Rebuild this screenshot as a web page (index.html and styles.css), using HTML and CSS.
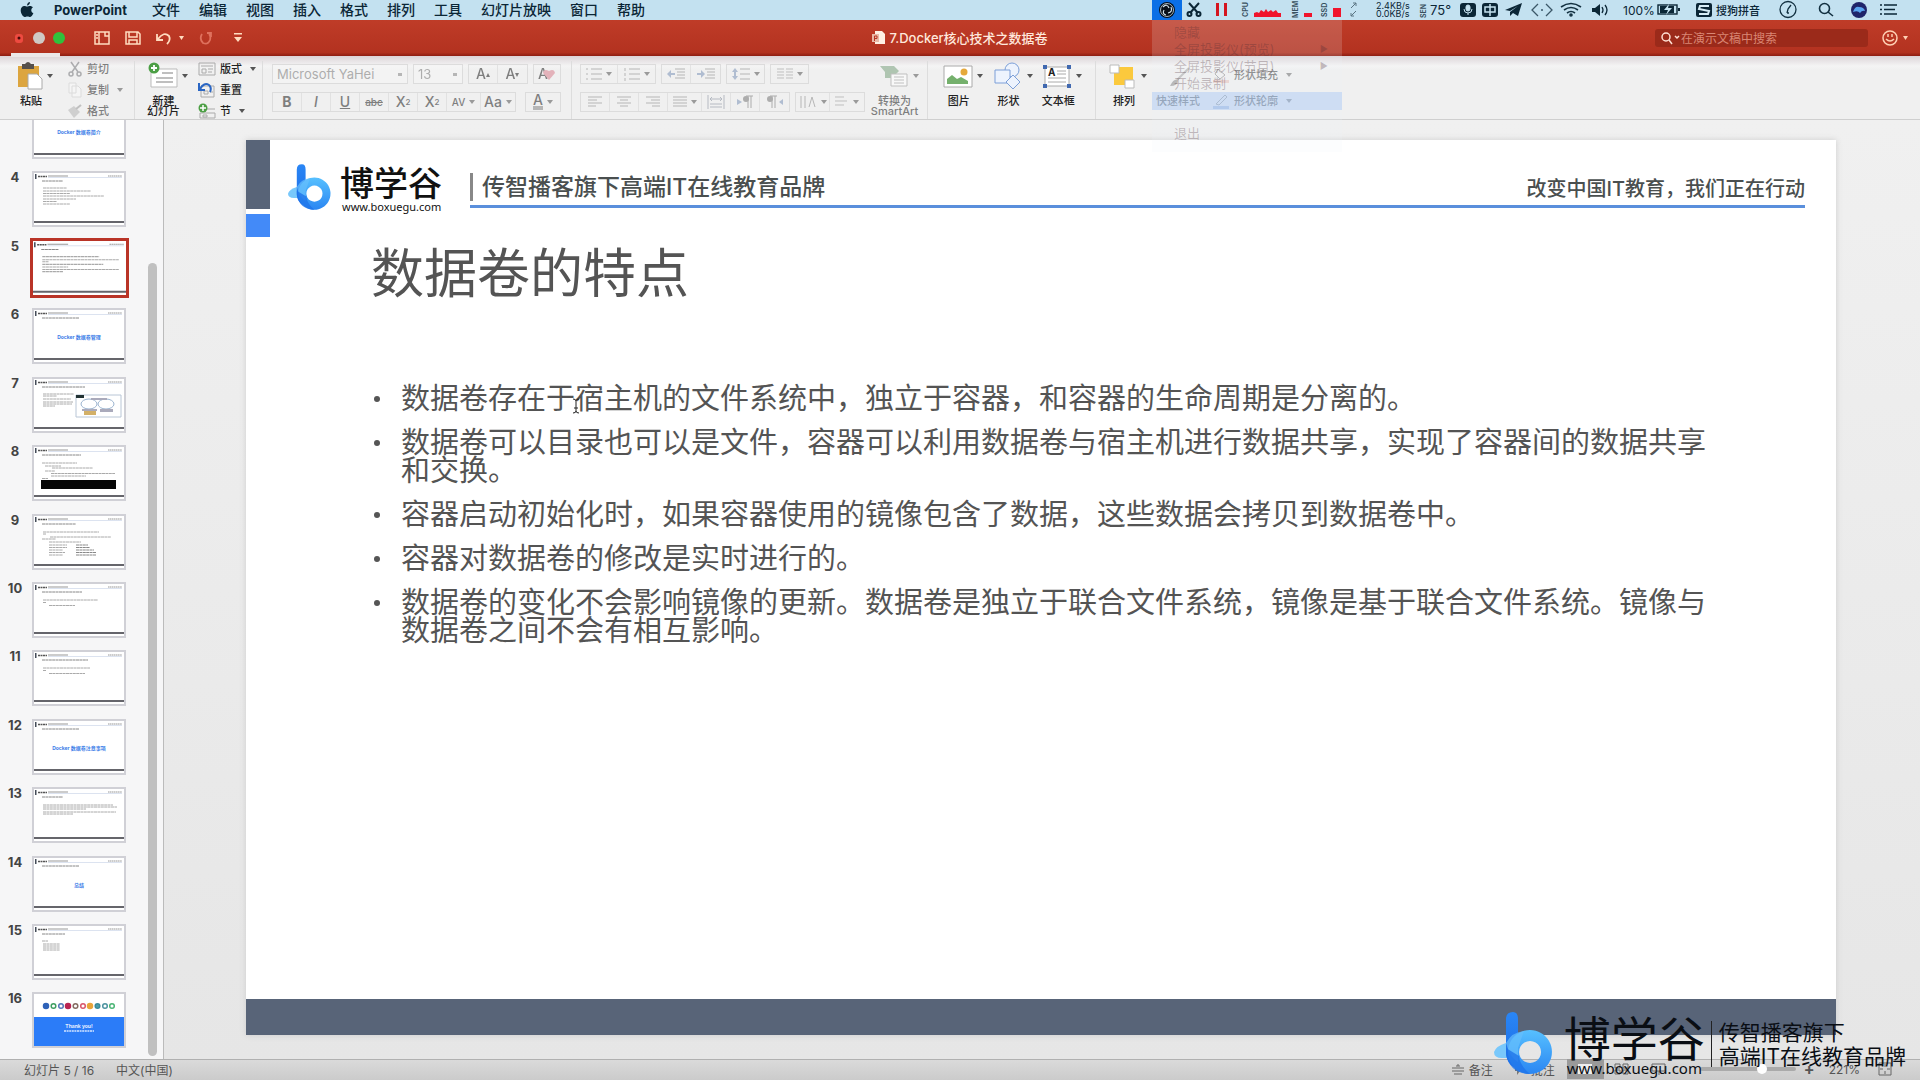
FILE: index.html
```html
<!DOCTYPE html>
<html lang="zh-CN">
<head>
<meta charset="utf-8">
<title>7.Docker核心技术之数据卷</title>
<link rel="stylesheet" href="styles.css">
</head>
<body>
<svg class="defs" aria-hidden="true">
  <defs>
    <linearGradient id="stem" x1="0" y1="0" x2="0" y2="1"><stop offset="0" stop-color="#2a86f5"/><stop offset="1" stop-color="#1b6be6"/></linearGradient>
    <linearGradient id="ring" x1="0" y1="0" x2="0" y2="1"><stop offset="0" stop-color="#57c0ff"/><stop offset="1" stop-color="#2a86f2"/></linearGradient>
    <symbol id="logo" viewBox="0 0 60 62">
      <path d="M0 40 Q2 34 12 31 L20 46 L8 46 Q0 46 0 40Z" fill="#79c8fb"/>
      <path d="M12 7 Q12 0 19 0 Q24 0 24 7 V40 L30 58 Q12 56 12 40Z" fill="url(#stem)"/>
      <path fill-rule="evenodd" d="M36 18 A22 22 0 1 1 35.900 18Z M36 29 A11 11 0 1 0 36.100 29Z" fill="url(#ring)"/>
      <path d="M12 31 Q18 20 30 19 L24 36 L24 50 Q16 46 12 31Z" fill="#66bffc" opacity=".7"/>
      <path d="M12 36 L25 44 Q26 54 36 62 Q16 62 12 42Z" fill="#1f74ea" opacity=".8"/>
    </symbol>
    <symbol id="head" viewBox="0 0 90 52">
      <path d="M1 1h1.500v5h-1.500z" fill="#444c58"/><path d="M4 3.500h9" stroke="#555" stroke-width="1.500" stroke-dasharray="2 .5"/><path d="M14 3h20" stroke="#999"/><path d="M74 3h14" stroke="#999" stroke-dasharray="1.500 .4"/><path d="M14 4.500h74" stroke="#b9c6e0" stroke-width=".5"/>
      <path d="M0 48h90v2h-90z" fill="#65656b"/>
    </symbol>
  </defs>
</svg>

<nav class="menubar">
  <svg class="apple" width="14" height="16" viewBox="0 0 14 16"><path d="M10 0c0 2-1.500 3.500-3 3.500 0-2 1.500-3.300 3-3.500zM7 4.600c1 0 1.800-.7 3.200-.7 1 0 2 .5 2.700 1.500-2.400 1.400-2 4.800.5 5.700-.8 2.200-2 3.900-3.200 3.900-1 0-1.400-.6-2.700-.6s-1.800.6-2.800.6C3 15 .7 11.500.7 8.300.7 5.500 2.400 3.900 4.200 3.900c1.200 0 2 .7 2.800.7z" fill="#0b2636"/></svg>
  <strong>PowerPoint</strong>
  <div class="menus"><span>文件</span><span>编辑</span><span>视图</span><span>插入</span><span>格式</span><span>排列</span><span>工具</span><span>幻灯片放映</span><span>窗口</span><span>帮助</span></div>
  <div class="tray">
    <svg width="30" height="20"><path d="M0 0h30v20h-30z" fill="#0a6fe6"/><circle cx="15" cy="10" r="8" fill="#081018"/><g fill="none" stroke="#cfe0ea"><circle cx="15" cy="10" r="6.500" stroke-width=".8"/><path d="M11 7q4-4 6 1M19 7q2 5-3 6M14 15q-4-1-2-5" stroke-width="1.200"/></g></svg>
    <svg width="24" height="20" fill="none" stroke="#0b2636" stroke-width="2"><path d="M7 3l9 10M17 3l-9 10"/><circle cx="7.500" cy="14" r="2"/><circle cx="16.500" cy="14" r="2"/></svg>
    <svg width="30" height="20"><path d="M10 3h3v13h-3zM18 3h3v13h-3z" fill="#d4141f"/></svg>
    <svg width="50" height="20"><text class="vlabel" transform="translate(12 17) rotate(-90)">CPU</text><path d="M18 17v-4l3-1 2 1 2-3 3 2 2-3 2 3 3-2 2 2 3-2 2 3 3 0v4z" fill="#f0142c"/></svg>
    <svg width="29" height="20"><text class="vlabel" transform="translate(12 18) rotate(-90)">MEM</text><path d="M18 13h8v4h-8z" fill="#f0142c"/></svg>
    <svg width="29" height="20"><text class="vlabel" transform="translate(12 17) rotate(-90)">SSD</text><path d="M18 8h8v9h-8z" fill="#f0142c"/></svg>
    <svg width="26" height="20" fill="none" stroke="#5a7482"><path d="M7 8l5-5M9 3h3v3M12 11l-5 5M7 13v3h3"/></svg>
    <span class="net">2.4KB/s<br>0.0KB/s</span>
    <svg width="16" height="20"><text class="vlabel" transform="translate(12 18) rotate(-90)">SEN</text></svg>
    <span class="temp">75°</span>
    <svg width="24" height="20"><rect x="4" y="3" width="16" height="14" rx="3" fill="#0b2636"/><g fill="none" stroke="#c5e2f0"><rect x="10" y="5" width="4" height="6" rx="2" fill="#c5e2f0"/><path d="M8 9q0 4 4 4t4-4M12 13v2"/></g></svg>
    <svg width="24" height="20"><rect x="2" y="3" width="16" height="14" rx="3" fill="#0b2636"/><path d="M5 7h10v5h-10zM10 4v12" fill="none" stroke="#c5e2f0" stroke-width="1.500"/></svg>
    <svg width="24" height="20"><path d="M1 10L18 3l-4 13-5-3-3 3v-4l8-6-8 5z" fill="#0b2636"/></svg>
    <svg width="28" height="20" fill="none" stroke="#3b5768" stroke-width="1.300"><path d="M10 4l-6 6 6 6M18 4l6 6-6 6M13 10h2"/></svg>
    <svg width="30" height="20" fill="none" stroke="#123040" stroke-width="1.600"><path d="M5 7q10-7 20 0M8 10q7-5 14 0M11 13q4-3 8 0"/><circle cx="15" cy="15" r="1"/></svg>
    <svg width="30" height="20"><path d="M6 8h3l5-4v12l-5-4h-3z" fill="#0b2636"/><path d="M16 7q2 3 0 6M19 5q4 5 0 10" fill="none" stroke="#0b2636" stroke-width="1.300"/></svg>
    <span class="pct">100%</span>
    <svg width="32" height="20"><rect x="2" y="5" width="19" height="9" fill="none" stroke="#0b2636" stroke-width="1.400"/><path d="M4 6h14v7h-14z" fill="#0b2636"/><path d="M13 4l-5 6h4l-2 5 6-7h-4z" fill="#c5e2f0"/><path d="M22 8h2v3h-2z" fill="#0b2636"/></svg>
    <svg width="28" height="20"><rect x="8" y="3" width="16" height="14" rx="2" fill="#0b2636"/><path d="M21 6h-9l-1 3 10 2-1 3h-9" fill="none" stroke="#d7edf6" stroke-width="2"/></svg>
    <span class="ime">搜狗拼音</span>
    <svg width="44" height="20" fill="none" stroke="#123040" stroke-width="1.300"><circle cx="20" cy="9.500" r="8"/><path d="M19 13l1-4 3-4M19 13h2"/></svg>
    <svg width="32" height="20" fill="none" stroke="#123040" stroke-width="1.600"><circle cx="12.500" cy="8.500" r="5"/><path d="M16 12l5 4"/></svg>
    <svg width="30" height="20"><circle cx="15" cy="10" r="8" fill="#20246a"/><path d="M9 12q2-6 6-5 5 0 6 4-3-1-5 2-2-3-7-1z" fill="#5aa4f0"/></svg>
    <svg width="46" height="20" stroke="#0b2636" stroke-width="1.700"><path d="M10 5h13M10 9.500h11M10 14h13M6 5h2M6 9.500h2M6 14h2"/></svg>
  </div>
</nav>

<header class="titlebar">
  <div class="quick">
    <svg width="70" height="20"><rect x="15" y="6" width="8" height="9" rx="3" fill="#ee4a40"/><circle cx="19" cy="10" r="1.500" fill="#4a0a08"/><circle cx="39" cy="10" r="6" fill="#cfc9c5"/><circle cx="59" cy="10" r="6" fill="#2fc13c"/></svg>
    <button aria-label="边栏"><svg width="16" height="14" fill="none" stroke="#ffdcc0" stroke-width="1.500"><path d="M1 1h14v12h-14zM5 1v12M11 1v4h4M2 4h2M2 7h2"/></svg></button>
    <button aria-label="保存"><svg width="16" height="14" fill="none" stroke="#ffdcc0" stroke-width="1.500"><path d="M1 1h12l2 2v10h-14zM4 1v5h8v-5M4 13v-4h8v4"/></svg></button>
    <button aria-label="撤销"><svg width="28" height="14" fill="none" stroke="#ffdcc0" stroke-width="1.800"><path d="M1 3v6h6M2 8q6-8 11-3 2 4-2 8"/><path d="M23 5h5l-2.500 4z" fill="#ffdcc0" stroke="none"/></svg></button>
    <button class="dim" aria-label="重做"><svg width="14" height="14" fill="none" stroke="#f08a76" stroke-width="1.800"><path d="M8 2h4v4M3 3q-3 5 1 9 5 2 7-3 1-4-1-6"/></svg></button>
    <button aria-label="自定义"><svg width="10" height="14"><path d="M1 2h8v1.500h-8zM1 6h8l-4 5z" fill="#ffdcc0"/></svg></button>
  </div>
  <h1><svg width="13" height="14"><path d="M3 0h7l3 3v10h-10z" fill="#fff0e4"/><path d="M0 3h7v8h-7z" fill="#e9b9a8"/><path d="M2.500 10v-5h2.500v2.500h-2" fill="none" stroke="#b73523"/></svg>7.Docker核心技术之数据卷</h1>
  <div class="find">
    <label class="search"><svg width="22" height="14" fill="none" stroke="#ffe0d4" stroke-width="1.500"><circle cx="7" cy="6" r="4"/><path d="M10 9l3 4M16 5l2 2 2-2"/></svg><input type="text" placeholder="在演示文稿中搜索" aria-label="搜索"></label>
    <svg width="26" height="18" fill="none" stroke="#ffd0b4" stroke-width="1.500"><circle cx="8" cy="9" r="7"/><path d="M4 10q4 4 8 0M6 5v3M10 5v3"/><path d="M21 7h5l-2.500 4z" fill="#ffd0b4" stroke="none"/></svg>
  </div>
</header>

<section class="ribbon">
  <div class="group paste">
    <button class="big"><span class="ico"><svg width="26" height="28"><path d="M1 4h21v21h-21z" fill="#dca53f"/><path d="M5 2h3q3-4 6 0h3v5h-12z" fill="#55504c"/><path d="M11 12h9l5 5v10h-14z" fill="#fff" stroke="#aaa"/></svg><i class="caret"></i></span>粘贴</button>
  </div>
  <div class="group stack clip faded">
    <button><svg width="16" height="16" fill="none" stroke="#76777b" stroke-width="1.500"><path d="M4 1l7 10M12 1l-7 10"/><circle cx="4" cy="13" r="2"/><circle cx="12" cy="13" r="2"/></svg>剪切</button>
    <button><svg width="16" height="16" fill="#fafafa" stroke="#ccc"><path d="M2 1h7v10h-7zM5 4h6l3 3v8h-9z"/></svg>复制<i class="caret"></i></button>
    <button><svg width="16" height="16"><path d="M1 7l6-4 6 6-6 6z" fill="#b5b5b5"/><path d="M9 6l5-4" stroke="#999" stroke-width="2"/></svg>格式</button>
  </div>
  <div class="group newslide">
    <button class="big"><span class="ico"><svg width="30" height="28"><path d="M3 7h26v18h-26z" fill="#fff" stroke="#bbb"/><path d="M14 11h11M8 16h17M8 20h17" stroke="#aaa" stroke-width="1.500"/><circle cx="6" cy="6" r="5.500" fill="#4c9f45"/><path d="M6 3v6M3 6h6" stroke="#fff" stroke-width="1.800"/></svg><i class="caret"></i></span>新建<br>幻灯片</button>
  </div>
  <div class="group stack layout">
    <button><svg width="18" height="16" fill="none" stroke="#aaa"><path d="M1 2h16v12h-16zM3 5h12M4 8h4v4h-4zM10 8h5M10 11h4"/></svg>版式<i class="caret"></i></button>
    <button><svg width="18" height="16" fill="none" stroke="#aaa"><path d="M3 4h13v11h-13zM6 9h4v3h-4zM12 10h3"/><path d="M1 1v7h6M2 7q4-7 9-4 3 3 1 7" stroke="#2a66c4" stroke-width="2"/></svg>重置</button>
    <button><svg width="18" height="16" fill="none" stroke="#aaa"><path d="M7 6h10M2 10h15v5h-15zM5 12h4v2h-4z"/><circle cx="5" cy="5" r="4.500" fill="#4c9f45" stroke="none"/><path d="M5 2v6M2 5h6" stroke="#fff" stroke-width="1.500"/></svg>节<i class="caret"></i></button>
  </div>
  <div class="group tools font faded">
    <div class="row">
      <select class="fontname" aria-label="字体"><option>Microsoft YaHei</option></select>
      <select class="fontsize" aria-label="字号"><option>13</option></select>
      <span class="set"><button class="t29">A<small>▴</small></button><button class="t29">A<small>▾</small></button></span>
      <span class="set"><button class="t27" aria-label="清除格式">A<svg width="14" height="14"><path d="M7 13l-6-7q1-5 6-2 5-3 6 2z" fill="#d9808f"/></svg></button></span>
    </div>
    <div class="row">
      <span class="set"><button class="t29"><b>B</b></button><button class="t29"><em>I</em></button><button class="t29"><u>U</u></button><button class="t29 sm"><s>abc</s></button><button class="t29">X<sup>2</sup></button><button class="t29">X<sub>2</sub></button><button class="t34 sm">AV<i class="caret"></i></button><button class="t34">Aa<i class="caret"></i></button></span>
      <span class="set last"><button class="t34"><span class="ink">A</span><i class="caret"></i></button></span>
    </div>
  </div>
  <div class="group tools para faded">
    <div class="row">
      <span class="set"><button class="t38"><svg width="16" height="14"><path d="M5 2h11M5 7h11M5 12h11M0 2h2M0 7h2M0 12h2" stroke="#888"/></svg><i class="caret"></i></button><button class="t38"><svg width="16" height="14"><path d="M5 2h11M5 7h11M5 12h11M1 1v3M1 6v3M1 11v3" stroke="#888"/></svg><i class="caret"></i></button></span>
      <span class="set"><button class="t29"><svg width="18" height="14"><path d="M8 2h10M10 5h8M10 8h8M8 11h10" stroke="#888"/><path d="M0 7l4-4v3h4v2h-4v3z" fill="#7d94b8"/></svg></button><button class="t29"><svg width="18" height="14"><path d="M8 2h10M10 5h8M10 8h8M8 11h10" stroke="#888"/><path d="M8 7l-4-4v3h-4v2h4v3z" fill="#7d94b8"/></svg></button></span>
      <span class="set"><button class="t38"><svg width="18" height="14"><path d="M8 2h10M8 7h10M8 12h10" stroke="#888"/><path d="M0 5l3-4 3 4zM0 9l3 4 3-4zM2 5h2v4h-2z" fill="#7d94b8"/></svg><i class="caret"></i></button></span>
      <span class="set"><button class="t38"><svg width="16" height="14"><path d="M0 2h7M0 5h7M0 8h7M0 11h7M9 2h7M9 5h7M9 8h7M9 11h7" stroke="#999"/></svg><i class="caret"></i></button></span>
    </div>
    <div class="row">
      <span class="set"><button class="t29"><svg width="14" height="14"><path d="M0 2h14M0 5h9M0 8h14M0 11h8" stroke="#888"/></svg></button><button class="t29"><svg width="14" height="14"><path d="M0 2h14M3 5h8M0 8h14M3 11h8" stroke="#888"/></svg></button><button class="t29"><svg width="14" height="14"><path d="M0 2h14M5 5h9M0 8h14M6 11h8" stroke="#888"/></svg></button><button class="t34"><svg width="14" height="14"><path d="M0 2h14M0 5h14M0 8h14M0 11h14" stroke="#888"/></svg><i class="caret"></i></button><button class="t29"><svg width="18" height="14" fill="none" stroke="#8890a0"><path d="M1 0v14M17 0v14M3 4h12M5 2l-2 2 2 2M13 2l2 2-2 2M3 9h12M3 12h12"/></svg></button><button class="t29"><svg width="18" height="14"><path d="M1 4l5 3-5 3z" fill="#7d94b8"/><path d="M12 1v12M15 1v12M10 1h7" stroke="#777"/><circle cx="10" cy="4" r="3" fill="#777"/></svg></button><button class="t29"><svg width="18" height="14"><path d="M17 4l-4 3 4 3z" fill="#7d94b8"/><path d="M6 1v12M9 1v12M4 1h7" stroke="#777"/><circle cx="4" cy="4" r="3" fill="#777"/></svg></button></span>
      <span class="set"><button class="t34"><svg width="18" height="14"><path d="M2 1v12M6 1v12M10 12l3-10 3 10" fill="none" stroke="#888"/></svg><i class="caret"></i></button><button class="t34"><svg width="14" height="14"><path d="M0 2h9M0 6h12M0 10h9" stroke="#999"/></svg><i class="caret"></i></button></span>
    </div>
  </div>
  <div class="group smart faded">
    <button class="big"><span class="ico"><svg width="30" height="28"><path d="M1 4h14l5 5-3 3h-3v4h-8v-6z" fill="#7ba27f"/><path d="M12 12h16v12h-16z" fill="#fff" stroke="#999"/><path d="M15 15h10M15 18h10M15 21h10" stroke="#999"/></svg><i class="caret"></i></span>转换为<br>SmartArt</button>
  </div>
  <div class="group insert">
    <button class="big"><span class="ico"><svg width="30" height="28"><path d="M1 4h28v21h-28z" fill="#fff" stroke="#aaa"/><path d="M4 22v-5l5-4 5 4 4-2 7 4v3z" fill="#74b06c"/><circle cx="21" cy="10" r="3.500" fill="#e5a93b"/></svg><i class="caret"></i></span>图片</button>
    <button class="big"><span class="ico"><svg width="30" height="28" fill="#edf3fd" stroke="#7c9fd8"><circle cx="19" cy="8" r="7"/><path d="M2 8h15v13h-15z"/><path d="M20 13l7 7-7 7-7-7z"/></svg><i class="caret"></i></span>形状</button>
    <button class="big"><span class="ico"><svg width="30" height="28"><path d="M3 5h24v19h-24z" fill="#fff" stroke="#aaa"/><path d="M15 9h9M15 12h9M6 16h18M6 20h18" stroke="#aaa"/><path d="M1 3h4v4h-4zM25 3h4v4h-4zM1 22h4v4h-4zM25 22h4v4h-4z" fill="#4169b0"/><text x="6" y="14" class="boxa">A</text></svg><i class="caret"></i></span>文本框</button>
  </div>
  <div class="group arrange">
    <button class="big"><span class="ico"><svg width="28" height="28"><path d="M5 5h19v18h-19z" fill="#fbc93d"/><path d="M1 3h9v8h-9zM16 18h9v8h-9z" fill="#fff" stroke="#bbb"/></svg><i class="caret"></i></span>排列</button>
  </div>
  <div class="group styles faded">
    <button class="big"><span class="ico"><svg width="36" height="28"><path d="M6 24q4-8 8-6 0 6-8 6z" fill="#777"/><path d="M13 18l12-12" stroke="#999" stroke-width="2"/></svg></span>快速样式</button>
  </div>
  <div class="group stack shapefmt faded">
    <button><svg width="18" height="16"><path d="M6 2l7 6-5 4-5-5z" fill="none" stroke="#777"/><path d="M1 13h16v3h-16z" fill="#e6b8b0"/></svg>形状填充<i class="caret"></i></button>
    <button><svg width="18" height="16"><path d="M4 11l9-9 2 2-8 8z" fill="none" stroke="#777"/><path d="M1 13h16v3h-16z" fill="#8ba8d8"/></svg>形状轮廓<i class="caret"></i></button>
  </div>
</section>

<div class="ghost" aria-hidden="true">
  <span>隐藏</span><span>全屏投影仪(预览)<i>▶</i></span><span>全屏投影仪(节目)<i>▶</i></span><span>开始录制</span><span class="on"></span><span class="quit">退出</span>
</div>

<div class="work">
  <aside>
    <ol>
      <li><b></b><svg viewBox="0 0 90 52"><use href="#head"/><text x="45" y="29" class="tt">Docker 数据卷简介</text></svg></li>
      <li><b>4</b><svg viewBox="0 0 90 52"><use href="#head"/><g class="ln"><path class="dk" d="M8 8h21"/><path d="M9 15h24M9 18h48M9 20.500h27M9 23h61M9 26h33M9 28.500h14M9 31h27"/></g></svg></li>
      <li class="sel"><b>5</b><svg viewBox="0 0 90 52"><use href="#head"/><g class="ln"><path class="dk" d="M8 8h17"/><path d="M9 15h55M9 18h74M9 20h6M9 22.500h59M9 25h25M9 27.500h74M9 29.500h20"/></g></svg></li>
      <li><b>6</b><svg viewBox="0 0 90 52"><use href="#head"/><path class="ln dk" d="M8 8h37"/><text x="45" y="29" class="tt">Docker 数据卷管理</text></svg></li>
      <li><b>7</b><svg viewBox="0 0 90 52"><use href="#head"/><g class="ln"><path class="dk" d="M8 8h43"/><path d="M9 15h31M9 17h14M9 20h28M9 23h30M9 25h29M9 27h12"/></g><path d="M42 16h45v22h-45z" fill="#fff" stroke="#b9c6d6"/><path d="M42 16h8v3h-8z" fill="#233"/><ellipse cx="55" cy="25" rx="8" ry="5" fill="none" stroke="#9bb4d0"/><ellipse cx="72" cy="25" rx="8" ry="5" fill="none" stroke="#9bb4d0"/><path d="M48 30h15v2h-15zM66 30h13v3h-13zM57 19h16v2h-16z" fill="#aab"/><path d="M50 32h12v4h-12z" fill="#d3b067"/></svg></li>
      <li><b>8</b><svg viewBox="0 0 90 52"><use href="#head"/><g class="ln"><path class="dk" d="M8 8h39"/><path d="M8 16h35M11 19h16M18 21h41M11 24h10M17 26.500h64M17 29h35M8 31.500h6"/></g><path d="M7 33h75v9h-75z" fill="#050505"/></svg></li>
      <li><b>9</b><svg viewBox="0 0 90 52"><use href="#head"/><g class="ln"><path class="dk" d="M8 8h34"/><path d="M9 16h56M9 18h3M16 21h61M8 23h14M15 26h32M15 29h18M15 31.500h18M15 34h14M15 36.500h16M15 39h14"/><path class="dk" d="M42 29h12M42 31.500h14M42 34h18M42 36.500h20M42 39h20"/></g></svg></li>
      <li><b>10</b><svg viewBox="0 0 90 52"><use href="#head"/><g class="ln"><path class="dk" d="M8 8h40"/><path d="M9 16h55M9 18.500h3M15 21.500h26"/></g></svg></li>
      <li><b>11</b><svg viewBox="0 0 90 52"><use href="#head"/><g class="ln"><path class="dk" d="M8 8h46"/><path d="M9 16h47M9 18.500h3M15 21.500h36"/></g></svg></li>
      <li><b>12</b><svg viewBox="0 0 90 52"><use href="#head"/><path class="ln dk" d="M8 8h37"/><text x="45" y="29" class="tt">Docker 数据卷注意事项</text></svg></li>
      <li><b>13</b><svg viewBox="0 0 90 52"><use href="#head"/><g class="ln"><path class="dk" d="M8 8h21"/><path d="M9 16h70M9 18h74M9 20h43M9 23h73M9 25h30"/></g></svg></li>
      <li><b>14</b><svg viewBox="0 0 90 52"><use href="#head"/><path class="ln dk" d="M8 8h37"/><text x="45" y="29" class="tt">总结</text></svg></li>
      <li><b>15</b><svg viewBox="0 0 90 52"><use href="#head"/><g class="ln"><path class="dk" d="M8 8h23"/><path d="M8 15h6M9 18h17M9 20h17M9 22h17M9 24h17"/></g></svg></li>
      <li><b>16</b><svg viewBox="0 0 90 52"><path d="M0 23h90v29h-90z" fill="#2b7cf8"/><g fill="#fff" stroke-width="1.500"><circle cx="12" cy="12" r="2.500" fill="#2e62b8" stroke="#2e62b8"/><circle cx="19.500" cy="12" r="2.300" stroke="#3f9f61"/><circle cx="27" cy="12" r="2.300" stroke="#5577b8"/><circle cx="34" cy="12" r="2.500" fill="#b92452" stroke="#b92452"/><circle cx="41.500" cy="12" r="2.300" stroke="#846a60"/><circle cx="49" cy="12" r="2.300" stroke="#d9556b"/><circle cx="56" cy="12" r="2.500" fill="#e8a43a" stroke="#e8a43a"/><circle cx="63.500" cy="12" r="2.300" fill="#4c9ca8" stroke="#388a9a"/><circle cx="71" cy="12" r="2.300" stroke="#4d93a0"/><circle cx="78" cy="12" r="2.300" stroke="#4cb576"/></g><text x="45" y="34" class="ty">Thank you!</text><path d="M30 37h30" stroke="#a9cbff" stroke-width="2" stroke-dasharray="2 .6"/></svg></li>
    </ol>
    <div class="scroll"></div>
  </aside>
  <main>
    <article class="slide">
      <div class="mark"><i></i><i></i></div>
      <div class="brand">
        <svg width="44" height="46"><use href="#logo"/></svg>
        <div class="name"><strong>博学谷</strong><span>www.boxuegu.com</span></div>
        <div class="line"><p class="slogan">传智播客旗下高端IT在线教育品牌</p><p class="motto">改变中国IT教育，我们正在行动</p></div>
      </div>
      <div class="content">
        <h2>数据卷的特点</h2>
        <ul>
          <li>数据卷存在于宿主机的文件系统中，独立于容器，和容器的生命周期是分离的。</li>
          <li>数据卷可以目录也可以是文件，容器可以利用数据卷与宿主机进行数据共享，实现了容器间的数据共享<br>和交换。</li>
          <li>容器启动初始化时，如果容器使用的镜像包含了数据，这些数据会拷贝到数据卷中。</li>
          <li>容器对数据卷的修改是实时进行的。</li>
          <li>数据卷的变化不会影响镜像的更新。数据卷是独立于联合文件系统，镜像是基于联合文件系统。镜像与<br>数据卷之间不会有相互影响。</li>
        </ul>
      </div>
      <div class="base"></div>
      <svg class="ibeam" width="8" height="16"><path d="M1 1q3 0 3 2v10q0 2-3 2M7 1q-3 0-3 2M7 15q-3 0-3-2M2 10h4" fill="none" stroke="#222"/></svg>
    </article>
  </main>
</div>

<footer class="status">
  <span class="pos">幻灯片 5 / 16</span><span>中文(中国)</span>
  <div class="right">
    <button><svg width="14" height="14" stroke="#666"><path d="M1 6h12M1 9h12M3 12h8M5 4h4M7 2v2"/></svg>备注</button>
    <button class="cm"><svg width="14" height="14"><path d="M2 2h10v7h-5l-3 4v-4h-2z" fill="#777"/></svg>批注</button>
    <span class="views"><button class="on" aria-label="普通视图"><svg width="16" height="12"><path d="M1 1h14v10h-14z" fill="#eee"/></svg></button><button aria-label="幻灯片浏览"><svg width="16" height="12"><path d="M1 1h5v4h-5zM9 1h5v4h-5zM1 7h5v4h-5zM9 7h5v4h-5z" fill="none" stroke="#666"/></svg></button><button aria-label="放映"><svg width="16" height="12"><path d="M1 1h13v7h-13zM8 8v4" fill="none" stroke="#666"/></svg></button></span>
    <span class="zoom"><input type="range" min="0" max="100" value="67" aria-label="缩放"><b>+</b></span>
    <span class="lvl">221%</span>
    <svg width="14" height="14" fill="none" stroke="#666"><path d="M1 1h12v12h-12zM7 2v3M7 9v3M2 7h3M9 7h3"/></svg>
  </div>
</footer>

<div class="watermark">
  <svg width="60" height="62"><use href="#logo"/></svg>
  <div class="wname"><strong>博学谷</strong><span>www.boxuegu.com</span></div>
  <p>传智播客旗下<br>高端IT在线教育品牌</p>
</div>
</body>
</html>
```
FILE: styles.css
```css
* { box-sizing: border-box; margin: 0; padding: 0; }
body {
  height: 100vh; display: flex; flex-direction: column; overflow: hidden; position: relative;
  font-family: "Inter", "Noto Sans CJK SC", sans-serif; font-size: 11px; color: #222; background: #ececec;
}
svg { flex: none; display: block; }
.defs { position: absolute; width: 0; height: 0; }
button { border: 0; background: none; font: inherit; color: inherit; display: flex; align-items: center; }
i { font-style: normal; }

.menubar { height: 20px; flex: none; background: #c3e1f0; display: flex; align-items: center; padding-left: 20px; color: #0b2636; white-space: nowrap; }
.menubar strong { width: 98px; padding-left: 20px; box-sizing: content-box; font-size: 13px; line-height: 20px; }
.menus { display: flex; gap: 19px; font-size: 14px; font-weight: 500; line-height: 20px; }
.tray { margin-left: auto; display: flex; align-items: center; height: 20px; }
.vlabel { font: 700 7px "Inter", sans-serif; fill: #38505e; }
.net { width: 44px; padding-left: 6px; font-size: 9px; line-height: 8px; }
.temp { width: 26px; font-size: 13px; }
.pct { width: 40px; padding-left: 7px; font-size: 12px; }
.ime { width: 52px; font-size: 11px; font-weight: 500; }

.titlebar { height: 36px; flex: none; display: grid; grid-template-columns: 1fr auto 1fr; align-items: center; background: linear-gradient(#bf3c28, #b33220 90%, #8e1d12); }
.quick { display: flex; align-items: center; }
.quick button { margin-left: 15px; }
.quick svg + button { margin-left: 24px; }
.quick .dim { opacity: .7; }
.quick .dim + button { margin-left: 20px; }
.titlebar h1 { display: flex; align-items: center; gap: 4px; color: #ffe8dc; font-size: 13px; font-weight: 500; line-height: 20px; }
.find { display: flex; justify-content: flex-end; align-items: center; gap: 14px; padding-right: 12px; }
.search { width: 213px; height: 18px; padding-left: 4px; border-radius: 3px; background: #9b2a1a; display: flex; align-items: center; }
.search input { flex: 1; min-width: 0; border: 0; outline: 0; background: none; font: 12px "Inter", "Noto Sans CJK SC", sans-serif; color: #fff; }
.search input::placeholder { color: #d98674; }

.ribbon { position: relative; height: 64px; flex: none; display: flex; background: linear-gradient(#dcd4d8, #f4f4f4 10px, #f0f0f0 14px); border-bottom: 1px solid #cfcfcf; padding-top: 5px; white-space: nowrap; }
.ribbon::before { content: ""; position: absolute; left: 11px; top: -3px; width: 49px; height: 4px; background: #ece8ea; }
.group { display: flex; flex: none; line-height: 10px; font-weight: 500; }
.group.faded > * { opacity: .55; }
.caret { width: 0; height: 0; border: 3px solid transparent; border-top: 4px solid #555; border-bottom: 0; margin-left: 4px; flex: none; }
.big { flex: 1; flex-direction: column; text-align: center; padding-top: 1px; }
.ico { display: flex; align-items: center; height: 28px; margin-bottom: 6px; padding-left: 8px; }
.paste { width: 62px; }
.clip { width: 72px; padding-left: 5px; }
.newslide { width: 64px; padding-right: 6px; border-left: 1px solid #ddd; }
.layout { width: 64px; }
.font { width: 309px; border-left: 1px solid #ddd; padding-left: 9px; }
.para { width: 295px; border-left: 1px solid #ddd; padding-left: 8px; }
.smart { width: 61px; padding-right: 4px; }
.insert { width: 168px; padding-right: 12px; border-left: 1px solid #ddd; }
.insert .big:first-child { padding-left: 6px; }
.arrange { width: 57px; border-left: 1px solid #ddd; }
.styles { width: 52px; }
.stack { flex-direction: column; gap: 5px; padding-top: 0; }
.stack button { height: 16px; gap: 4px; }
.shapefmt { padding: 6px 0 0 8px; gap: 10px; }
.tools { flex-direction: column; gap: 8px; padding-top: 3px; font-size: 14px; }
.row { display: flex; gap: 5px; height: 20px; }
.set { display: flex; border: 1px solid #ccc; }
.set.last { margin-left: auto; margin-right: 10px; }
.set button { justify-content: center; border-right: 1px solid #d6d6d6; line-height: 14px; }
.set button:last-child { border-right: 0; }
.t27 { width: 26px; }
.t29 { width: 29px; }
.t34 { width: 34px; }
.t38 { width: 37px; }
.t27 svg { margin-left: -6px; }
.sm { font-size: 10px; }
.tools small, .tools sup, .tools sub { font-size: 8px; }
.ink { border-bottom: 4px solid #888; line-height: 12px; }
.row select { appearance: none; border: 1px solid #ccc; background: #f6f6f6 linear-gradient(#888, #888) right 5px center / 4px 3px no-repeat; font: 13px "Inter", sans-serif; color: #777; padding-left: 4px; }
.fontname { width: 136px; }
.fontsize { width: 50px; }
.boxa { font: 700 10px "Inter", sans-serif; fill: #222; }

.ghost { position: absolute; left: 60%; top: 20px; width: 190px; height: 132px; padding-top: 3px; background: rgba(240, 242, 247, .17); font-size: 13px; color: rgba(70, 40, 50, .28); z-index: 3; }
.ghost span { display: flex; height: 17px; align-items: center; padding: 0 14px 0 22px; }
.ghost i { margin-left: auto; font-size: 9px; }
.ghost .on { height: 18px; margin-top: 1px; background: rgba(160, 195, 245, .42); }
.ghost .quit { margin-top: 14px; }

.work { flex: 1; min-height: 0; display: flex; }
aside { width: 164px; flex: none; display: flex; justify-content: space-between; background: #f6f6f7; border-right: 1px solid #bbb; overflow: hidden; }
aside ol { list-style: none; width: 130px; height: calc(100% + 19px); margin-top: -17px; display: flex; flex-direction: column; }
aside li { flex: 1; min-height: 0; display: flex; align-items: flex-start; }
aside li b { width: 30px; font-size: 13px; line-height: 13px; text-align: center; color: #444; }
aside li svg { width: 94px; height: 56px; margin-left: 2px; border: 2px solid #d0d0d6; background: #fff; }
aside .sel svg { width: 99px; height: 60px; margin: -2px 0 0; border: 3px solid #b93427; }
.ln, .ln path { stroke: #aaa; stroke-width: 1; stroke-dasharray: 3 .4; fill: none; }
.dk, .ln .dk { stroke: #888; stroke-width: 1; }
.tt { font: 700 5px "Inter", "Noto Sans CJK SC", sans-serif; fill: #3b7de8; text-anchor: middle; }
.ty { font: 700 5px "Inter", sans-serif; fill: #e2eeff; text-anchor: middle; }
.scroll { width: 9px; margin: 143px 6px 3px 0; border-radius: 5px; background: #c0c0c0; }

main { flex: 1; padding: 20px 84px 0 82px; background: linear-gradient(#f0f0f0, #e6e6e6); }
.slide { position: relative; aspect-ratio: 1590 / 895; background: #fff; display: flex; flex-direction: column; box-shadow: 0 0 6px #ccc; }
.mark { position: absolute; left: 0; top: 0; }
.mark i { display: block; width: 24px; height: 69px; background: #586478; }
.mark i + i { height: 23px; margin-top: 5px; background: #438af8; }
.brand { display: flex; align-items: flex-start; padding: 24px 31px 0 42px; height: 68px; }
.name { width: 130px; flex: none; margin-left: 8px; display: flex; flex-direction: column; color: #111; }
.name strong { font-size: 34px; line-height: 36px; font-weight: 500; padding-top: 2px; }
.name span { font: 11px/10px "Noto Sans", sans-serif; margin-left: 2px; }
.line { flex: 1; height: 44px; border-bottom: 3px solid #5a8fdc; display: flex; justify-content: space-between; align-items: center; color: #4a4f4f; font-weight: 500; padding-top: 4px; }
.slogan { font-size: 23px; line-height: 28px; border-left: 3px solid #888; padding-left: 9px; }
.motto { font-size: 20px; line-height: 28px; padding-top: 4px; }
.content { flex: 1; padding: 38px 60px 0 125px; color: #545454; }
.content h2 { font-size: 53px; line-height: 56px; font-weight: 400; }
.content ul { list-style: none; margin-top: 83px; display: flex; flex-direction: column; gap: 16px; }
.content li { font-size: 29px; line-height: 28px; white-space: nowrap; padding-left: 30px; position: relative; }
.content li::before { content: ""; position: absolute; left: 3px; top: 11px; width: 6px; height: 6px; border-radius: 50%; background: #555; }
.base { height: 36px; background: #586478; }
.ibeam { position: absolute; left: 326px; top: 258px; }

.status { height: 21px; flex: none; display: flex; align-items: center; gap: 22px; padding: 0 28px 2px 24px; border-top: 1px solid #b0b0b0; background: linear-gradient(#dadada, #cbcbcb); font-size: 12px; color: #555; white-space: nowrap; }
.right { margin-left: auto; display: flex; align-items: center; height: 20px; }
.right button { gap: 4px; }
.right .cm { margin-left: 20px; }
.views { display: flex; height: 20px; margin-left: 12px; }
.views button { width: 37px; justify-content: center; }
.views .on { background: #9a9a9a; }
.zoom { display: flex; align-items: center; gap: 8px; margin-left: 22px; }
.zoom b { font-size: 16px; }
.zoom input { width: 96px; height: 12px; appearance: none; background: none; }
.zoom input::-webkit-slider-runnable-track { height: 4px; background: #aaa; border-radius: 2px; }
.zoom input::-webkit-slider-thumb { appearance: none; width: 10px; height: 10px; margin-top: -3px; border-radius: 50%; background: #fff; }
.lvl { margin: 0 18px 0 14px; }

.watermark { position: absolute; right: 14px; bottom: 5px; height: 63px; display: flex; align-items: flex-start; color: #0a0e14; z-index: 4; white-space: nowrap; }
.wname { display: flex; flex-direction: column; align-items: center; margin-left: 10px; padding-right: 6px; }
.wname strong { font-size: 47px; line-height: 48px; font-weight: 400; margin-top: 3px; }
.wname span { font: 15px/10px "Noto Sans", sans-serif; }
.watermark p { font-size: 21px; line-height: 24px; border-left: 1px solid #222; padding-left: 7px; margin-top: 9px; height: 46px; }
```
